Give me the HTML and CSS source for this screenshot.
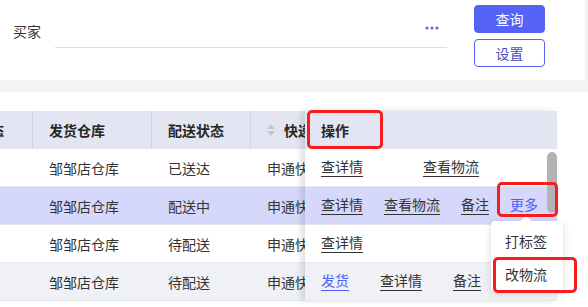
FILE: index.html
```html
<!DOCTYPE html>
<html lang="zh">
<head>
<meta charset="utf-8">
<link rel="stylesheet" href="styles.css">
</head>
<body>
<header class="filter">
  <div class="field">
    <span class="field-label">买家</span>
    <div class="field-input">
      <svg class="dots" width="14" height="4" viewBox="0 0 14 4"><circle cx="2" cy="2" r="1.6"/><circle cx="7" cy="2" r="1.6"/><circle cx="12" cy="2" r="1.6"/></svg>
    </div>
  </div>
  <div class="actions">
    <button class="btn btn-primary">查询</button>
    <button class="btn btn-ghost">设置</button>
  </div>
</header>
<div class="band"></div>
<section class="table-wrap">
  <div class="table">
    <div class="scroll">
      <div class="scroll-inner">
        <div class="row head">
          <div class="cell c0"><span class="clip-text">订单状态</span></div>
          <div class="cell c1">发货仓库</div>
          <div class="cell c2">配送状态</div>
          <div class="cell c3"><span class="sort"><i class="up"></i><i class="down"></i></span>快递公司</div>
        </div>
        <div class="row">
          <div class="cell c0"></div><div class="cell c1">邹邹店仓库</div><div class="cell c2">已送达</div><div class="cell c3">申通快递</div>
        </div>
        <div class="row hl">
          <div class="cell c0"></div><div class="cell c1">邹邹店仓库</div><div class="cell c2">配送中</div><div class="cell c3">申通快递</div>
        </div>
        <div class="row">
          <div class="cell c0"></div><div class="cell c1">邹邹店仓库</div><div class="cell c2">待配送</div><div class="cell c3">申通快递</div>
        </div>
        <div class="row alt">
          <div class="cell c0"></div><div class="cell c1">邹邹店仓库</div><div class="cell c2">待配送</div><div class="cell c3">申通快递</div>
        </div>
      </div>
    </div>
    <div class="fixed">
      <div class="row head"><div class="ops">操作</div></div>
      <div class="row"><div class="ops ops-wide"><a class="link">查详情</a><a class="link">查看物流</a></div></div>
      <div class="row hl"><div class="ops ops-tight"><a class="link">查详情</a><a class="link">查看物流</a><a class="link">备注</a><a class="link link-more">更多</a></div></div>
      <div class="row"><div class="ops"><a class="link">查详情</a></div></div>
      <div class="row alt"><div class="ops ops-mid"><a class="link link-blue">发货</a><a class="link">查详情</a><a class="link">备注</a></div></div>
      <div class="thumb"></div>
    </div>
    <div class="menu">
      <div class="menu-item">打标签</div>
      <div class="menu-item">改物流</div>
    </div>
    <div class="mark mark-head"></div>
    <div class="mark mark-more"></div>
    <div class="mark mark-menu"></div>
  </div>
</section>
</body>
</html>
```

FILE: styles.css
```css
* { box-sizing: border-box; }
html, body { margin: 0; padding: 0; background: #fff; }
body {
  width: 588px;
  height: 307px;
  overflow: hidden;
  font-family: "Noto Sans CJK SC", "Noto Sans", sans-serif;
  font-size: 14px;
  color: #333;
}

.filter {
  display: flex;
  height: 80px;
  padding: 5px 0 0 13px;
  border-right: 3px solid #f2f2f4;
}
.field {
  display: flex;
  align-items: flex-start;
  margin-top: 16px;
}
.field-label {
  line-height: 20px;
  color: #333;
}
.field-input {
  margin-left: 14px;
  width: 392px;
  height: 27px;
  border-bottom: 1px solid #dcdcdc;
  display: flex;
  justify-content: flex-end;
  padding: 5px 8px 0 0;
}
.dots { fill: #5a68f2; }
.actions {
  margin-left: 27px;
  display: flex;
  flex-direction: column;
  gap: 6px;
}
.btn {
  width: 71px;
  height: 28px;
  border-radius: 4px;
  font-family: inherit;
  font-size: 14px;
  padding: 0;
  line-height: 26px;
}
.btn-primary {
  background: #5462f6;
  border: 1px solid #5462f6;
  color: #fff;
}
.btn-ghost {
  background: #fff;
  border: 1px solid #5462f6;
  color: #4a4fc8;
}

.band { height: 12px; background: #f2f3f5; }

.table-wrap { padding-top: 19px; }
.table {
  position: relative;
  display: flex;
  width: 557px;
}
.scroll { width: 305px; overflow: hidden; }
.scroll-inner { margin-left: -63px; width: 474px; }

.row {
  display: flex;
  align-items: center;
  height: 38px;
  border-bottom: 1px solid #e6e7ec;
  background: #fff;
}
.row.head {
  background: #e3e6f2;
  font-weight: 600;
  color: #262626;
  border-bottom: none;
}
.row.hl { background: #d5d8fb; }
.row.alt { background: #f0f1f6; }

.cell {
  height: 100%;
  display: flex;
  align-items: center;
  padding-left: 16px;
  white-space: nowrap;
  overflow: hidden;
}
.cell.c0 { padding-left: 11px; }
.head .cell { border-right: 1px solid #d2d5e1; }
.head .cell.c3 { border-right: none; }
.c0 { width: 96px; }
.c1 { width: 119px; }
.c2 { width: 99px; }
.c3 { width: 160px; }

.sort {
  display: inline-flex;
  flex-direction: column;
  gap: 2px;
  margin-right: 9px;
}
.sort i {
  width: 0;
  height: 0;
  border-left: 4px solid transparent;
  border-right: 4px solid transparent;
}
.sort .up { border-bottom: 5px solid #c4c6cc; }
.sort .down { border-top: 5px solid #c4c6cc; }

.fixed {
  position: relative;
  width: 252px;
  box-shadow: -4px 0 6px rgba(0, 0, 0, 0.12);
  z-index: 1;
}
.ops {
  display: flex;
  align-items: center;
  padding-left: 16px;
  white-space: nowrap;
  margin-top: -4px;
}
.head .ops { margin-top: 0; }
.link {
  color: #333;
  text-decoration: underline;
  text-decoration-color: #333;
  text-underline-offset: 4px;
  margin-left: 20px;
}
.link:first-child { margin-left: 0; }
.ops-wide .link + .link { margin-left: 60px; }
.ops-tight .link + .link { margin-left: 21px; }
.ops-mid .link + .link { margin-left: 31px; }
.link-blue { color: #4f5ef2; text-decoration-color: #4f5ef2; }
.link-more { color: #4f5ef2; text-decoration: none; margin-left: 22px; }

.thumb {
  position: absolute;
  right: 0;
  top: 41px;
  width: 10px;
  height: 61px;
  border-radius: 5px;
  background: #b3b3b6;
}

.menu {
  position: absolute;
  left: 491px;
  top: 110px;
  width: 72px;
  height: 70px;
  background: #fff;
  border-radius: 4px;
  box-shadow: 0 2px 8px rgba(0, 0, 0, 0.15);
  padding-top: 9px;
  z-index: 2;
}
.menu::before {
  content: "";
  position: absolute;
  left: 31px;
  top: -4px;
  width: 8px;
  height: 8px;
  background: #fff;
  transform: rotate(45deg);
  box-shadow: -1px -1px 2px rgba(0, 0, 0, 0.06);
}
.menu-item {
  position: relative;
  height: 33px;
  line-height: 22px;
  padding-left: 14px;
  color: #333;
}

.mark {
  position: absolute;
  border: 3px solid #f51d1d;
  border-radius: 5px;
  z-index: 3;
}
.mark-head { left: 307px; top: -1px; width: 76px; height: 39px; }
.mark-more { left: 497px; top: 71px; width: 61px; height: 35px; }
.mark-menu { left: 493px; top: 146px; width: 84px; height: 36px; }
```
